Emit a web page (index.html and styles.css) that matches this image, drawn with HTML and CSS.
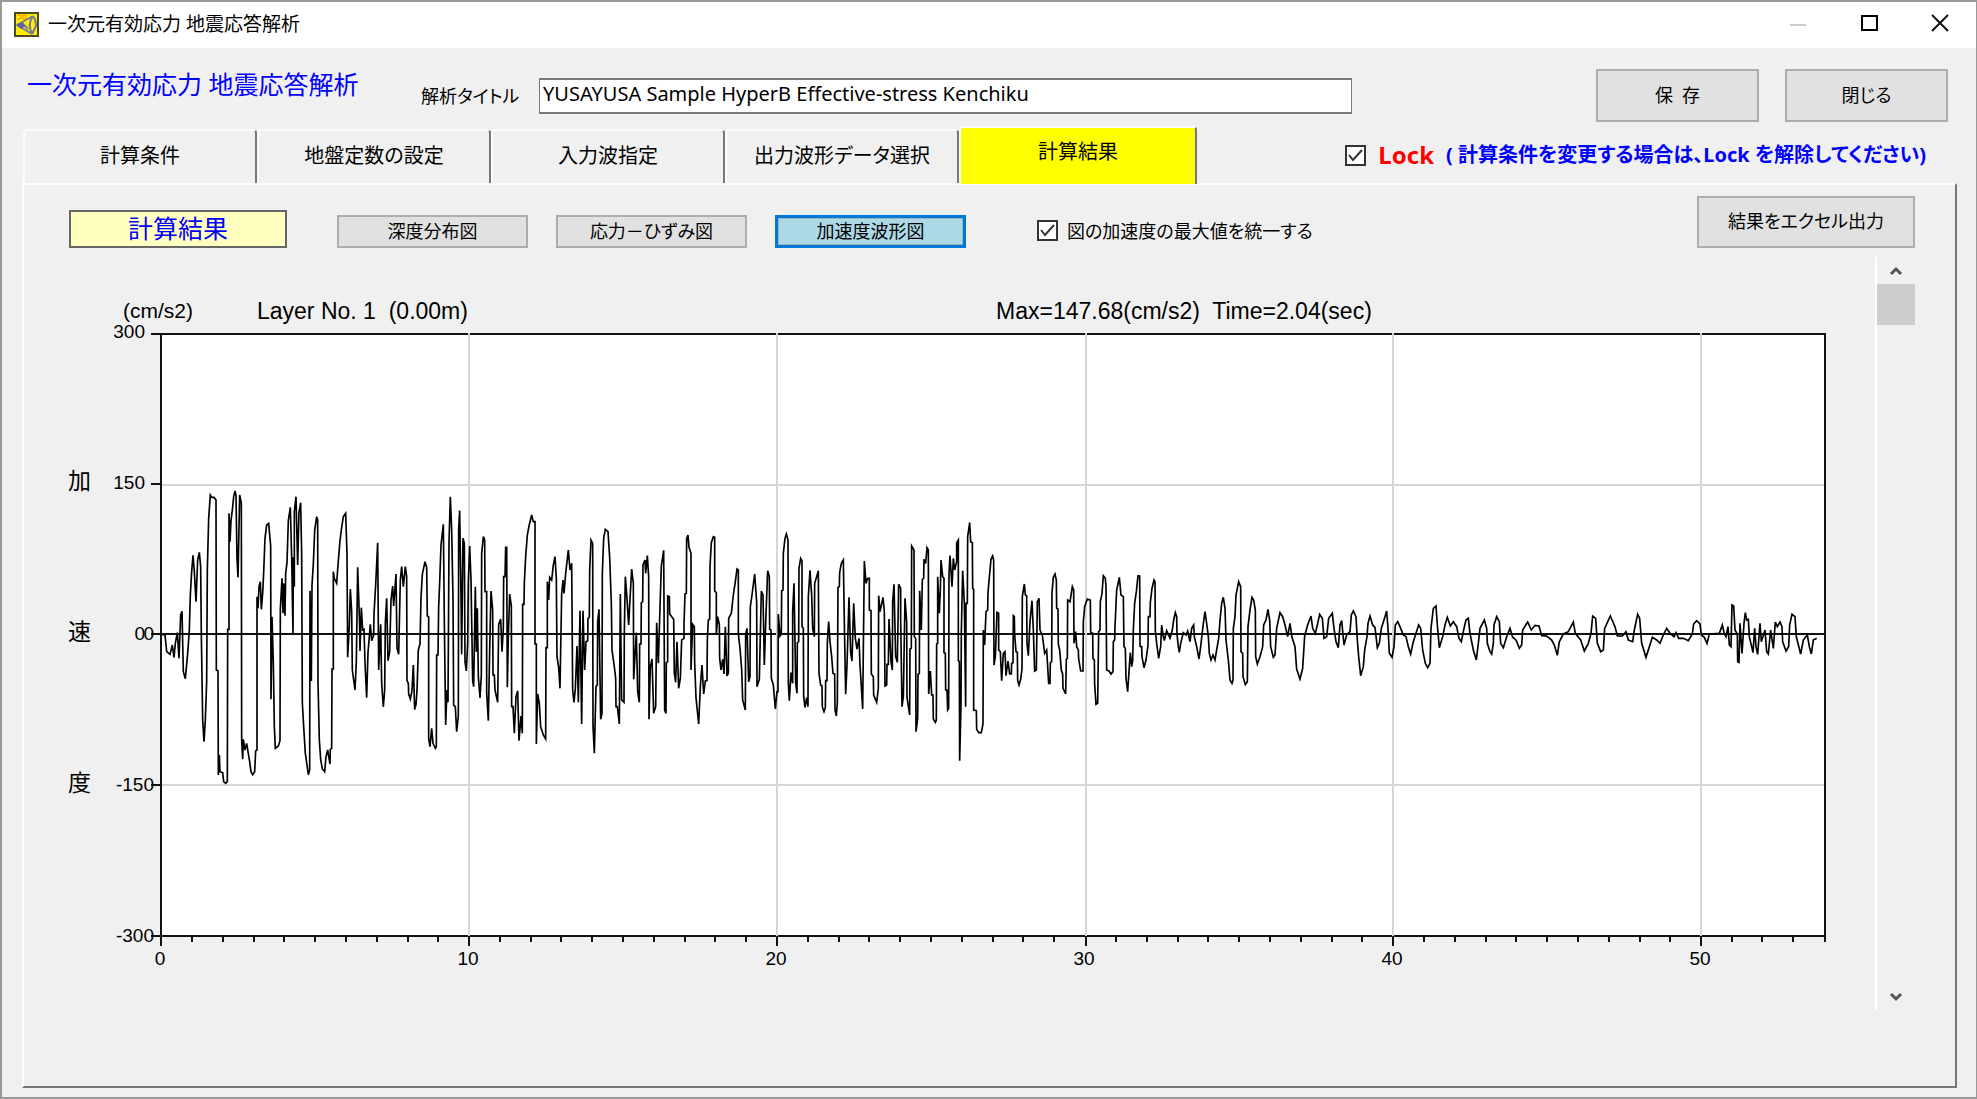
FILE: index.html
```html
<!DOCTYPE html>
<html lang="ja">
<head>
<meta charset="utf-8">
<title>一次元有効応力 地震応答解析</title>
<link rel="stylesheet" href="styles.css">
</head>
<body>
<div class="window">
  <div class="titlebar">
    <svg class="app-icon" width="25" height="25" viewBox="0 0 25 25" aria-hidden="true">
      <rect x="1" y="1" width="23" height="23" fill="#ffee00" stroke="#4c4a20" stroke-width="2"/>
      <path d="M3 13 L19 4 M3 13 L18 22 M8 11 L14 17 M19 4 Q13 12 18 22 M19 4 Q22 8 22 14 L18 22" fill="none" stroke="#7479a0" stroke-width="2"/>
      <path d="M3 3h4v4H3 M9 3h3v4H9z" fill="none" stroke="#ff8a00" stroke-width="1"/>
      <path d="M2 13l6-3 3 4-4 3z" fill="#5a66a8"/>
    </svg>
    <span class="titlebar-text">一次元有効応力 地震応答解析</span>
    <div class="window-buttons">
      <button type="button" aria-label="最小化" disabled><svg width="18" height="20" viewBox="0 0 18 20"><path d="M1 11h16" stroke="#ccc" stroke-width="2"/></svg></button>
      <button type="button" aria-label="最大化"><svg width="18" height="20" viewBox="0 0 18 20"><rect x="2" y="2" width="15" height="14" fill="none" stroke="#000" stroke-width="2"/></svg></button>
      <button type="button" aria-label="閉じる"><svg width="18" height="20" viewBox="0 0 18 20"><path d="M1 1l16 16M17 1L1 17" stroke="#111" stroke-width="2"/></svg></button>
    </div>
  </div>

  <header class="header">
    <h1 class="heading">一次元有効応力 地震応答解析</h1>
    <label class="title-label" for="analysis-title">解析タイトル</label>
    <input class="title-input" id="analysis-title" type="text" value="YUSAYUSA Sample HyperB Effective-stress Kenchiku">
    <div class="header-buttons">
      <button class="button button-large" type="button">保&ensp;存</button>
      <button class="button button-large" type="button">閉じる</button>
    </div>
  </header>

  <div class="tab-row">
    <nav class="tabs">
      <button class="tab" type="button">計算条件</button>
      <button class="tab" type="button">地盤定数の設定</button>
      <button class="tab" type="button">入力波指定</button>
      <button class="tab" type="button">出力波形データ選択</button>
      <button class="tab tab-active" type="button">計算結果</button>
    </nav>
    <div class="lock">
      <input class="check" type="checkbox" id="lock" checked>
      <label class="lock-label" for="lock">Lock</label>
      <span class="lock-note">( 計算条件を変更する場合は、Lock を解除してください)</span>
    </div>
  </div>

  <main class="panel">
    <div class="toolbar">
      <h2 class="section-name">計算結果</h2>
      <div class="views">
        <button class="button" type="button">深度分布図</button>
        <button class="button" type="button">応力－ひずみ図</button>
        <button class="button button-selected" type="button">加速度波形図</button>
      </div>
      <div class="unify">
        <input class="check" type="checkbox" id="unify" checked>
        <label for="unify">図の加速度の最大値を統一する</label>
      </div>
      <button class="button button-export" type="button">結果をエクセル出力</button>
    </div>

    <div class="result">
      <svg class="chart" viewBox="60 257 1815 753" role="img" aria-label="加速度波形図">
        <rect x="161" y="334" width="1664" height="602" fill="#fff"/>
        <path class="axis" d="M151 334H1825V942M161 334V946M151 484H161M151 785H161M151 936H1825M151 634H1825"/>
        <path class="axis" d="M192 936v6M223 936v6M254 936v6M284 936v6M315 936v6M346 936v6M377 936v6M408 936v6M438 936v6M469 936v10M500 936v6M531 936v6M561 936v6M592 936v6M623 936v6M654 936v6M685 936v6M715 936v6M746 936v6M777 936v10M808 936v6M839 936v6M869 936v6M900 936v6M931 936v6M962 936v6M993 936v6M1023 936v6M1054 936v6M1086 936v10M1116 936v6M1147 936v6M1178 936v6M1208 936v6M1239 936v6M1270 936v6M1301 936v6M1332 936v6M1362 936v6M1393 936v10M1424 936v6M1455 936v6M1486 936v6M1516 936v6M1547 936v6M1578 936v6M1609 936v6M1640 936v6M1670 936v6M1701 936v10M1732 936v6M1762 936v6M1793 936v6"/>
        <path class="grid" d="M469 333V936M777 333V936M1086 333V936M1393 333V936M1701 333V936M162 485H1824M162 785H1824"/>

        <g class="trace">
          <g transform="translate(150 470) scale(.33333)"><polyline points="35,493 45,495 50,545 60,553 67,525 72,562 76,520 82,488 87,565 92,435 96,424 100,605 106,626 113,550 118,480 121,375 125,305 129,256 133,305 138,395 143,270 148,247 152,290 154,493 158,750 162,815 166,750 170,635 172,300 176,145 181,75 185,82 192,82 198,90 199,600 204,603 205,915 208,855 210,905 218,908 221,935 227,940 232,935 233,478 237,478 237,130 240,215 243,152 247,120 251,80 255,63 258,75 261,265 264,322 269,75 274,100 275,810 278,868 280,808 285,840 290,820 294,845 299,875 303,905 308,914 314,905 317,843 321,840 321,380 324,415 327,350 331,335 334,418 338,370 341,308 345,205 350,165 356,160 362,228 363,688 366,440 370,580 373,770 376,835 385,828 390,812 391,418 396,325 399,430 401,340 405,437 407,310 411,278 415,152 421,112 425,262 429,492 430,262 433,350 433,125 438,80 443,285 447,128 452,98 455,250 457,697 461,770 466,850 475,914 479,900 480,362 484,633 486,345 490,283 494,182 500,140 503,150 504,636 508,810 512,868 517,897 524,905 528,860 533,840 540,882 541,838 545,835 546,597 550,597 550,305 553,325 560,340 564,285 570,212 575,172 580,140 587,130 591,250 593,562 598,465 601,357 605,425 607,600 615,660 619,575 623,292 629,470 630,543 634,413 638,480 642,478 645,578 650,683 654,548 661,463 665,512 671,495 672,432 677,345 683,218 686,600 692,463 695,640 700,711 704,660 706,460 710,385 714,572 719,545 723,390 728,348 731,408 738,312 741,535 746,553 751,330 755,290 760,350 766,290 770,320 771,632 775,640 776,672 781,687 786,662 790,585 794,719 798,703 801,662 805,540 810,522 813,383 817,313 825,275 830,292 832,438 836,440 836,805 840,830 845,775 849,820 856,835 859,830 860,555 864,555 866,410 869,338 873,225 880,163 883,452 887,765 891,660 894,697 897,218 901,80 905,180 909,385 911,706 916,710 920,785 925,738 926,178 929,122 933,375 935,553 939,205 943,220 945,575 949,603 953,520 955,335 959,228 963,327 968,632 971,650 976,350 979,545 982,415 985,620 990,683"/></g>
          <g transform="translate(480 470) scale(.33333)"><polyline points="0,683 4,615 5,250 10,200 14,210 15,365 20,365 20,668 25,752 29,543 33,363 38,420 39,615 43,615 45,660 53,697 56,463 62,447 66,545 70,475 71,320 75,320 77,232 80,232 82,652 85,500 89,372 94,408 95,710 99,710 103,790 108,680 113,662 117,812 123,738 127,790 128,403 132,403 133,338 137,260 142,195 147,168 155,135 160,155 165,155 165,522 169,522 169,822 173,672 178,700 182,770 190,795 197,807 198,533 202,533 202,335 206,390 209,322 215,330 220,285 225,260 229,325 231,560 236,592 240,655 245,372 249,330 252,370 257,310 265,240 270,300 275,280 278,660 282,697 286,655 291,528 295,697 300,422 305,762 309,422 314,600 318,515 323,512 324,445 328,442 329,302 333,210 338,220 339,767 343,850 348,650 352,645 353,455 357,418 362,748 366,730 367,310 371,205 376,178 384,185 389,262 394,400 396,540 403,590 407,625 408,710 412,710 418,762 421,372 425,690 432,697 433,485 436,320 441,385 446,465 450,388 455,297 460,340 461,628 469,488 473,665 478,697 479,522 483,522 484,398 488,395 489,285 495,270 497,310 502,257 506,320 507,748 511,590 516,567 521,730 527,710 530,458 535,580 540,412 544,288 551,241 554,720 558,730 559,578 563,575 563,378 568,380 569,432 581,448 583,610 587,637 591,515 596,655 601,625 605,510 612,505 612,463 615,372 619,370 620,205 624,195 627,232 633,250 633,600 638,463 643,470 644,578 648,683 656,762 661,650 666,585 671,672 676,633 681,632 682,510 685,450 689,448 690,290 694,218 700,200 704,202 704,363 709,368 709,493 713,440 718,463 719,565 723,600 728,568 732,612 736,470 741,618 745,610 746,445 754,430 760,375 766,335 771,297 775,300 775,492 780,535 785,598 788,690 796,720 797,492 801,475 806,635 810,620 811,410 816,375 824,312 830,395 831,650 838,628 844,363 849,375 853,585 858,432 863,302 868,320 869,478 873,480 874,625 880,645 886,717 891,665 894,665 895,432 900,498 904,492 905,362 909,360 910,250 915,205 919,192 924,210 925,640 928,692 933,608 938,640 938,425 942,340 947,637 951,670 952,518 956,515 957,295 962,265 966,272 966,470 970,475 971,680 975,712 980,683 984,710 985,380 990,302"/></g>
          <g transform="translate(810 470) scale(.33333)"><polyline points="0,302 5,375 8,475 13,500 14,340 20,320 25,302 27,610 32,645 36,648 37,710 42,725 46,713 47,632 51,632 52,518 56,455 60,515 65,560 69,610 74,612 75,720 79,738 82,697 84,352 88,350 89,308 94,280 100,270 103,457 107,673 111,585 117,382 122,548 126,573 131,400 136,505 141,537 147,505 150,585 154,650 158,717 163,273 168,340 173,325 178,325 178,420 183,422 184,612 190,620 191,675 200,697 205,655 206,377 210,425 219,382 223,425 225,648 230,645 231,583 235,583 237,447 243,575 247,600 248,395 252,343 257,560 262,577 266,343 272,355 272,447 276,710 280,680 285,385 290,455 291,683 299,735 300,537 304,535 305,228 312,240 313,500 317,505 318,785 323,745 324,613 328,610 329,362 334,480 337,328 341,325 342,268 347,280 351,233 355,240 356,672 361,603 365,675 369,675 370,747 376,757 379,750 380,522 383,520 383,320 388,430 391,360 393,270 398,320 402,325 402,548 406,550 407,660 411,660 413,720 416,715 417,310 420,257 426,350 430,265 434,300 440,275 440,218 445,210 445,572 448,575 449,872 453,705 454,487 458,302 463,400 467,710 468,400 472,400 473,200 479,158 482,215 487,218 488,355 491,358 491,720 499,722 500,778 506,788 514,788 519,762 520,480 524,525 528,425 533,420 534,368 538,322 543,268 548,258 551,270 552,585 556,560 561,427 566,430 566,540 571,545 575,632 580,550 585,545 588,617 594,573 599,612 604,612 605,580 609,578 610,437 613,440 614,493 618,545 622,547 623,632 627,645 632,628 636,597 637,380 643,342 646,375 650,377 651,520 655,557 660,455 666,392 670,480 674,603 679,600 682,395 687,385 690,480 697,495 704,550 710,540 716,640 720,640 721,578 725,575 726,368 730,322 735,312 739,330 740,415 744,417 745,522 749,540 754,600 758,612 759,655 767,672 769,568 772,565 773,390 780,395 787,350 791,360 792,520 797,485 800,530 805,540 806,567 812,603 819,603 820,455 824,410 832,387 841,390 842,487 848,490 849,565 853,570 854,643 858,703 863,700 866,485 870,480 871,395 876,370 880,317 886,325 888,350 890,600 897,603 903,612 909,605 910,515 914,510 915,470 920,360 928,322 933,375 940,380 942,530 946,535 948,625 953,665 957,605 961,548 965,590 968,572 970,480 974,400 979,365 984,317 989,318 990,530"/></g>
          <g transform="translate(1140 500) scale(.33333)"><polyline points="0,440 5,440 6,470 12,503 18,480 24,435 25,350 30,350 31,308 36,265 42,240 45,245 46,393 50,430 56,475 62,440 65,375 69,405 73,422 80,392 90,415 97,390 101,360 106,338 110,350 111,403 115,440 118,457 122,430 130,398 138,405 143,393 150,425 155,385 161,375 163,410 170,440 177,477 182,440 186,405 190,370 195,335 200,370 205,410 208,460 213,480 219,465 225,480 230,450 236,415 240,362 245,310 250,292 255,325 258,420 265,480 270,540 276,550 279,540 280,385 285,350 288,285 296,245 302,260 303,455 308,460 309,530 316,554 322,545 324,380 330,330 336,292 341,300 346,330 347,470 352,492 360,470 368,440 371,375 378,360 384,328 389,360 392,440 400,472 405,465 410,385 420,338 428,350 435,375 443,410 450,370 456,412 465,440 470,508 480,537 488,505 494,408 503,375 513,348 518,385 526,400 532,375 539,343 547,355 552,415 560,410 566,355 577,340 582,385 588,425 595,443 600,375 605,362 612,435 620,405 630,395 634,345 640,333 648,350 652,420 656,470 662,527 670,500 674,450 681,410 684,370 690,348 698,375 705,382 712,443 718,430 724,385 732,360 740,333 745,400 748,460 756,472 762,440 766,375 773,365 780,380 790,405 798,410 805,440 812,462 820,425 828,400 836,375 842,385 848,450 856,490 863,503 870,490 873,385 880,325 888,318 892,375 898,443 908,410 915,375 922,352 931,378 940,365 950,380 957,415 964,425 972,385 978,360 985,355 990,400 1000,450 1009,480 1015,430 1020,385 1033,360 1040,385 1042,430 1050,455"/></g>
          <g transform="translate(1490 500) scale(.33333)"><polyline points="0,455 5,462 10,430 12,375 20,350 28,365 32,430 40,443 50,410 60,385 68,412 78,420 88,445 95,435 98,390 113,366 124,390 135,376 147,378 155,407 170,408 185,420 193,435 202,466 208,425 220,402 235,395 250,366 256,400 272,420 283,453 295,430 303,400 308,348 317,355 322,430 332,455 340,450 344,385 361,348 375,380 382,408 397,408 408,395 415,420 428,425 433,390 443,343 449,355 455,430 468,472 478,440 487,412 500,420 510,430 520,405 530,385 540,400 552,410 558,398 566,415 580,415 595,422 607,402 611,372 620,362 630,372 634,405 643,412 651,430 658,402 688,400 697,375 703,402 708,410 714,380 718,435 723,440 726,315 731,318 735,390 742,403 743,485 747,487 750,370 756,460 762,370 766,338 770,360 775,358 778,410 785,440 789,458 794,385 798,440 803,463 810,370 814,425 825,390 830,455 835,462 842,390 850,445 856,366 862,380 870,366 876,380 878,425 888,453 896,440 899,375 906,343 915,350 919,410 932,462 940,420 952,405 958,440 964,462 970,420 980,415"/></g>
        </g>

        <g class="caption">
          <text x="257" y="319" xml:space="preserve">Layer No. 1  (0.00m)</text>
          <text x="996" y="319" xml:space="preserve">Max=147.68(cm/s2)  Time=2.04(sec)</text>
          <text x="68" y="489">加</text>
          <text x="68" y="640">速</text>
          <text x="68" y="791">度</text>
        </g>
        <text class="unit" x="123" y="318">(cm/s2)</text>
        <g class="scale">
          <g text-anchor="end">
            <text x="145" y="338">300</text>
            <text x="145" y="489">150</text>
            <text x="145" y="640">0</text>
            <text x="154" y="640">0</text>
            <text x="154" y="791">-150</text>
            <text x="154" y="942">-300</text>
          </g>
          <g text-anchor="middle">
            <text x="160" y="965">0</text>
            <text x="468" y="965">10</text>
            <text x="776" y="965">20</text>
            <text x="1084" y="965">30</text>
            <text x="1392" y="965">40</text>
            <text x="1700" y="965">50</text>
          </g>
        </g>
      </svg>
      <div class="scrollbar">
        <button class="arrow" type="button" aria-label="上へ"><svg width="14" height="10" viewBox="0 0 14 10"><path d="M2 8l5-5 5 5" fill="none" stroke="#555" stroke-width="3"/></svg></button>
        <div class="thumb"></div>
        <button class="arrow arrow-down" type="button" aria-label="下へ"><svg width="14" height="10" viewBox="0 0 14 10"><path d="M2 2l5 5 5-5" fill="none" stroke="#555" stroke-width="3"/></svg></button>
      </div>
    </div>
  </main>
</div>
</body>
</html>
```
FILE: styles.css
```css
* {
  box-sizing: border-box;
}

body {
  margin: 0;
  background: #f0f0f0;
  color: #000;
  font-family: "Noto Sans", "Noto Sans CJK JP", sans-serif;
  font-size: 18px;
  line-height: 24px;
}

button,
input {
  margin: 0;
  color: inherit;
  font: inherit;
}

.window {
  display: flex;
  flex-direction: column;
  min-height: 100vh;
  border: 2px solid #999;
  border-right-width: 1px;
}

/* Title bar */

.titlebar {
  display: flex;
  align-items: center;
  height: 46px;
  padding: 0 27px 2px 12px;
  background: #fff;
}

.titlebar-text {
  margin-left: 9px;
  font-size: 19px;
}

.window-buttons {
  display: flex;
  gap: 53px;
  margin-left: auto;
}

.window-buttons button {
  display: flex;
  padding: 0;
  border: 0;
  background: none;
}

/* Header */

.header {
  display: flex;
  align-items: center;
  padding: 21px 28px 0 25px;
}

.heading {
  align-self: flex-start;
  width: 394px;
  margin: 0;
  color: #00f;
  font-size: 25px;
  font-weight: 400;
  line-height: 30px;
}

.title-label {
  width: 118px;
  font-feature-settings: "palt";
}

.title-input {
  flex: 1;
  min-width: 0;
  height: 36px;
  margin-right: 244px;
  padding: 0 3px 4px;
  border: 2px solid #7a7a7a;
  border-width: 2px 1px;
  background: #fff;
  font-size: 20px;
}

.header-buttons {
  display: flex;
  gap: 26px;
}

.button {
  width: 191px;
  height: 33px;
  padding: 0 0 2px;
  border: 2px solid #adadad;
  background: #e1e1e1;
  font-feature-settings: "palt";
}

.button-large {
  width: 163px;
  height: 53px;
}

/* Tabs */

.tab-row {
  display: flex;
  align-items: center;
  margin-top: 4px;
  padding: 0 50px 0 21px;
}

.tabs {
  display: flex;
  align-items: flex-end;
  align-self: flex-end;
}

.tab {
  width: 234px;
  height: 55px;
  padding: 0 0 3px;
  border: 2px solid #fcfcfc;
  border-right-color: #777;
  border-bottom: 0;
  border-radius: 4px 4px 0 0;
  background: #f0f0f0;
  font-size: 20px;
  font-feature-settings: "palt";
}

.tab-active {
  position: relative;
  width: 238px;
  height: 58px;
  padding-bottom: 8px;
  background: #ff0;
}

.lock {
  display: flex;
  align-items: center;
  margin-left: auto;
  color: #00f;
  font-size: 20px;
  font-weight: 700;
}

.lock-label {
  margin: 0 12px;
  color: #f00;
  font-size: 24px;
}

.lock-note {
  font-feature-settings: "palt";
  white-space: nowrap;
}

.check {
  width: 21px;
  height: 21px;
  border: 2px solid #333;
  background: #fff url("data:image/svg+xml,%3Csvg xmlns='http://www.w3.org/2000/svg' viewBox='0 0 17 17'%3E%3Cpath d='M2 8l4 5 9-10' fill='none' stroke='%23333' stroke-width='2'/%3E%3C/svg%3E") center / 17px 17px no-repeat;
  appearance: none;
}

/* Result panel */

.panel {
  flex: 1;
  margin: -1px 19px 9px 20px;
  padding: 11px 40px 0 36px;
  border: 2px solid #fcfcfc;
  border-right-color: #777;
  border-bottom-color: #777;
}

.toolbar {
  display: flex;
  align-items: flex-end;
  padding-left: 9px;
}

.section-name {
  width: 218px;
  height: 38px;
  margin: 0;
  border: 2px solid #666;
  background: #ffffc0;
  color: #00f;
  font-size: 25px;
  font-weight: 400;
  line-height: 32px;
  text-align: center;
}

.views {
  display: flex;
  gap: 28px;
  margin-left: 50px;
}

.button-selected {
  border: 3px solid #0078d7;
  background: #add8e6;
  box-shadow: inset 0 0 0 1px #9ab4c0;
}

.unify {
  display: flex;
  align-items: center;
  gap: 9px;
  height: 35px;
  margin-left: 71px;
  font-feature-settings: "palt";
}

.button-export {
  width: 218px;
  height: 52px;
  margin-left: auto;
}

.result {
  display: flex;
  margin-top: 9px;
}

.chart {
  display: block;
  flex: 1;
  min-width: 0;
}

.axis {
  fill: none;
  stroke: #111;
  stroke-width: 2;
}

.grid {
  fill: none;
  stroke: #d6d6d6;
  stroke-width: 2;
}

.trace {
  fill: none;
  stroke: #000;
  stroke-width: 5;
}

.caption,
.unit,
.scale {
  font-family: "Liberation Sans", "Noto Sans CJK JP", sans-serif;
}

.caption {
  font-size: 23px;
}

.unit {
  font-size: 21px;
}

.scale {
  font-size: 19px;
}

.scrollbar {
  display: flex;
  flex-direction: column;
  width: 40px;
  border-left: 2px solid #fff;
}

.arrow {
  display: flex;
  align-items: center;
  justify-content: center;
  height: 27px;
  padding: 0;
  border: 0;
  background: none;
}

.thumb {
  height: 41px;
  background: #cdcdcd;
}

.arrow-down {
  margin-top: auto;
}
```
